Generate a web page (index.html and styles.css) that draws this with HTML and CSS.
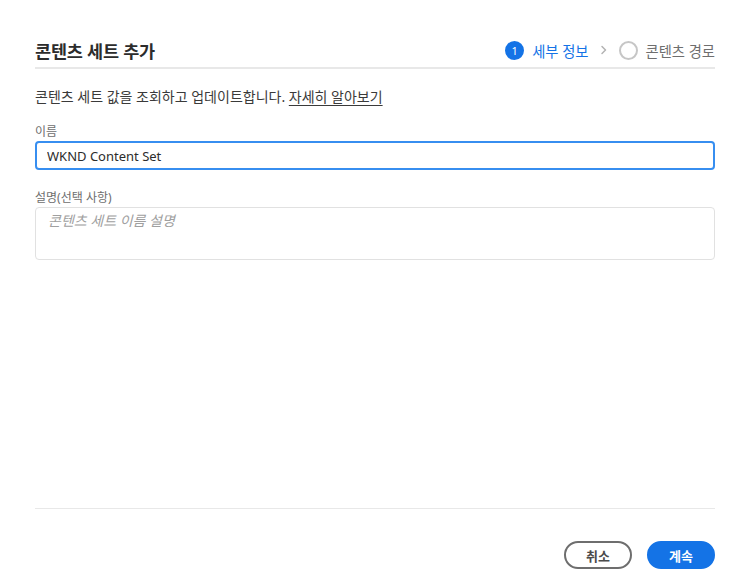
FILE: index.html
```html
<!DOCTYPE html>
<html lang="ko">

<head>
    <meta charset="UTF-8">
    <meta name="viewport" content="width=device-width, initial-scale=1.0">
    <title>콘텐츠 세트 추가</title>
    <link rel="stylesheet" href="styles.css">
</head>

<body>
    <div class="dialog">
        <header class="dialog-header">
            <h2 class="dialog-title">콘텐츠 세트 추가</h2>
            <ol class="steps">
                <li class="step active"><span class="step-mark">1</span>세부 정보</li>
                <li class="step-sep">
                    <svg width="8" height="10" viewBox="0 0 8 10"><path d="M2 1.5 5.5 5 2 8.5" fill="none" stroke="#b3b3b3" stroke-width="1.5" stroke-linecap="round" stroke-linejoin="round"/></svg>
                </li>
                <li class="step"><span class="step-mark"></span>콘텐츠 경로</li>
            </ol>
        </header>

        <section class="dialog-body">
            <p class="intro">콘텐츠 세트 값을 조회하고 업데이트합니다. <a href="#">자세히 알아보기</a></p>

            <label class="field-label" for="name">이름</label>
            <input id="name" class="text-field focused" type="text" value="WKND Content Set">

            <label class="field-label" for="desc">설명(선택 사항)</label>
            <textarea id="desc" class="text-area" placeholder="콘텐츠 세트 이름 설명"></textarea>
        </section>

        <footer class="dialog-footer">
            <button class="btn btn-secondary">취소</button>
            <button class="btn btn-primary">계속</button>
        </footer>
    </div>
</body>

</html>
```

FILE: styles.css
```css
* {
    margin: 0;
    padding: 0;
    box-sizing: border-box
}

:root {
    --text-color: #2c2c2c;
    --muted: #6e6e6e;
    --blue: #1473e6;
    --divider: #e8e8e8;
    --border-color: #e1e1e1
}

body {
    background: #fff;
    color: var(--text-color);
    font-family: "Noto Sans", "Noto Sans CJK KR", sans-serif
}

.dialog {
    width: 750px;
    height: 588px;
    padding: 33px 35px 19px;
    display: flex;
    flex-direction: column
}

.dialog-header {
    display: flex;
    justify-content: space-between;
    align-items: center;
    height: 36px;
    border-bottom: 2px solid var(--divider)
}

.dialog-title {
    font-size: 17.5px;
    font-weight: 700;
    letter-spacing: -0.2px
}

.steps {
    display: flex;
    align-items: center;
    list-style: none;
    font-size: 14.3px;
    color: var(--muted)
}

.step {
    display: flex;
    align-items: center;
    gap: 8px
}

.step.active {
    color: var(--blue)
}

.step-mark {
    width: 19px;
    height: 19px;
    border-radius: 50%;
    border: 2px solid #c6c6c6;
    display: flex;
    align-items: center;
    justify-content: center;
    font-size: 11px;
    color: #fff
}

.step.active .step-mark {
    background: var(--blue);
    border-color: var(--blue)
}

.step-sep {
    display: flex;
    padding: 0 11px
}

.dialog-body {
    flex: 1;
    padding-top: 18px;
    display: flex;
    flex-direction: column;
    border-bottom: 1px solid var(--divider)
}

.intro {
    font-size: 14px;
    line-height: 20px;
    color: #3a3a3a
}

.intro a {
    color: #3a3a3a;
    text-decoration: underline;
    text-underline-offset: 3px
}

.field-label {
    margin-top: 16px;
    margin-bottom: 1px;
    font-size: 12px;
    line-height: 17px;
    color: var(--muted)
}

.text-field,
.text-area {
    width: 100%;
    font-family: inherit;
    font-size: 13px;
    color: var(--text-color);
    border: 1px solid var(--border-color);
    border-radius: 4px;
    outline: none;
    background: #fff
}

.text-field {
    height: 29px;
    padding: 0 10px
}

.text-field.focused {
    border: 2px solid #378ef0
}

.text-field + .field-label {
    margin-top: 19px
}

.text-area {
    height: 53px;
    padding: 2px 12px;
    resize: none
}

.text-area::placeholder {
    color: #a0a0a0;
    font-style: italic;
    font-size: 14px
}

.dialog-footer {
    display: flex;
    justify-content: flex-end;
    gap: 15px;
    padding-top: 32px
}

.btn {
    height: 28px;
    min-width: 68px;
    padding: 0 16px;
    border-radius: 14px;
    font-family: inherit;
    font-size: 13px;
    font-weight: 700;
    cursor: pointer
}

.btn-secondary {
    width: 68px;
    background: #fff;
    border: 2px solid #6e6e6e;
    color: #4b4b4b
}

.btn-primary {
    background: var(--blue);
    border: 2px solid var(--blue);
    color: #fff
}
```
